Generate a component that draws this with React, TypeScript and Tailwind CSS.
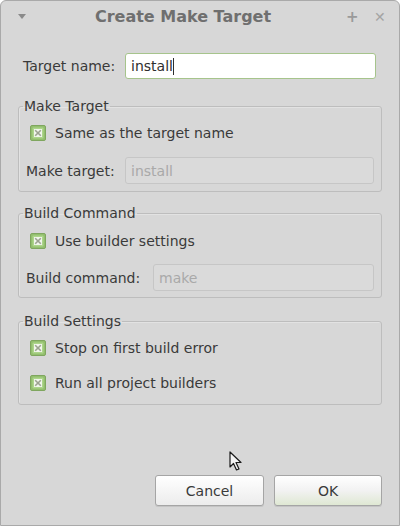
import React from "react"

function Check() {
  return (
    <svg width="16" height="16" viewBox="0 0 16 16" className="shrink-0">
      <rect x="0.5" y="0.5" width="15" height="15" rx="1.5" fill="#93bf6e" stroke="#7fa65f" />
      <rect x="2.5" y="2.5" width="11" height="11" rx="1" fill="#add58b" />
      <rect x="4" y="4" width="8" height="8" fill="#f1f6ec" />
      <path d="M5.2 5.2 L10.8 10.8 M10.8 5.2 L5.2 10.8" stroke="#9ca291" strokeWidth="1.6" />
    </svg>
  )
}

function CheckRow({ text, className }: { text: string; className?: string }) {
  return (
    <label className={`flex items-center gap-[9px] h-[16px] ml-[11px] ${className ?? ""}`}>
      <Check />
      <span>{text}</span>
    </label>
  )
}

function Group({ title, className, children }: { title: string; className?: string; children: React.ReactNode }) {
  return (
    <fieldset className={`border border-[#bdbdbd] rounded-[3px] mx-[17px] shadow-[inset_1px_1px_0_#e2e2e2] ${className ?? ""}`}>
      <legend className="ml-[4px] px-[1px] h-[16px] leading-[16px] text-[#3a3a3a]">{title}</legend>
      {children}
    </fieldset>
  )
}

export default function App() {
  return (
    <div
      className="relative w-[400px] h-[526px] bg-[#d7d7d7] border border-[#a9a9a9] rounded-t-[6px] overflow-hidden text-[14px] leading-[16px] text-[#3a3a3a]"
      style={{ fontFamily: '"DejaVu Sans", sans-serif' }}
    >
      {/* Title bar */}
      <div className="relative h-[31px] flex items-center justify-center">
        <svg width="8" height="5" viewBox="0 0 8 5" className="absolute left-[17px] top-[13px]">
          <path d="M0 0 H8 L4 5 Z" fill="#8a8a8a" />
        </svg>
        <span className="text-[16px] leading-[20px] font-bold text-[#6f6f6f] -ml-[34px]">Create Make Target</span>
        <span className="absolute left-[345px] top-[6px] text-[15px] leading-[20px] font-bold text-[#9a9a9a]">+</span>
        <span className="absolute left-[373px] top-[6px] text-[14px] leading-[20px] font-bold text-[#a4a4a4]">✕</span>
      </div>

      {/* Target name */}
      <div className="flex items-center mt-[21px] pl-[22px] pr-[23px]">
        <span className="w-[102px]">Target name:</span>
        <div className="flex-1 h-[26px] bg-white border border-[#a6c48c] rounded-[3px] flex items-center pl-[5px] text-[#2e2e2e]">
          install<span className="w-[1px] h-[17px] bg-[#2e2e2e]" />
        </div>
      </div>

      <Group title="Make Target" className="mt-[19px] pb-[7px]">
        <CheckRow text="Same as the target name" className="mt-[11px]" />
        <div className="flex items-center mt-[16px] ml-[7px] mr-[7px]">
          <span className="w-[99px]">Make target:</span>
          <div className="flex-1 h-[27px] border border-[#c6c6c6] rounded-[3px] bg-[#dadada] flex items-center pl-[5px] text-[#a9a9a9]">
            install
          </div>
        </div>
      </Group>

      <Group title="Build Command" className="mt-[13px] pb-[6px]">
        <CheckRow text="Use builder settings" className="mt-[12px]" />
        <div className="flex items-center mt-[15px] ml-[7px] mr-[7px]">
          <span className="w-[127px]">Build command:</span>
          <div className="flex-1 h-[27px] border border-[#c6c6c6] rounded-[3px] bg-[#dadada] flex items-center pl-[5px] text-[#a9a9a9]">
            make
          </div>
        </div>
      </Group>

      <Group title="Build Settings" className="mt-[15px] pb-[13px]">
        <CheckRow text="Stop on first build error" className="mt-[11px]" />
        <CheckRow text="Run all project builders" className="mt-[19px]" />
      </Group>

      {/* Buttons */}
      <div className="absolute left-[154px] top-[474px] flex gap-[10px]">
        <button className="w-[109px] h-[31px] rounded-[3px] border border-[#a5a5a5] bg-gradient-to-b from-[#ffffff] to-[#ececec] shadow-[0_1px_0_#c4c4c4] text-[#3a3a3a]">
          Cancel
        </button>
        <button className="w-[108px] h-[31px] rounded-[3px] border border-[#a5a5a5] bg-gradient-to-b from-[#ffffff] via-[#f2f2f2] to-[#dfe8d3] shadow-[0_1px_0_#c4c4c4] text-[#3a3a3a]">
          OK
        </button>
      </div>

      {/* Mouse pointer */}
      <svg width="16" height="22" viewBox="0 0 16 22" className="absolute left-[228px] top-[450px]">
        <path d="M1 1 L1 16 L4.5 12.5 L7.5 19 L10 18 L7 11.5 L12 11.5 Z" fill="#f4f4f4" stroke="#1a1a1a" strokeWidth="1.2" strokeLinejoin="round" />
      </svg>
    </div>
  )
}
